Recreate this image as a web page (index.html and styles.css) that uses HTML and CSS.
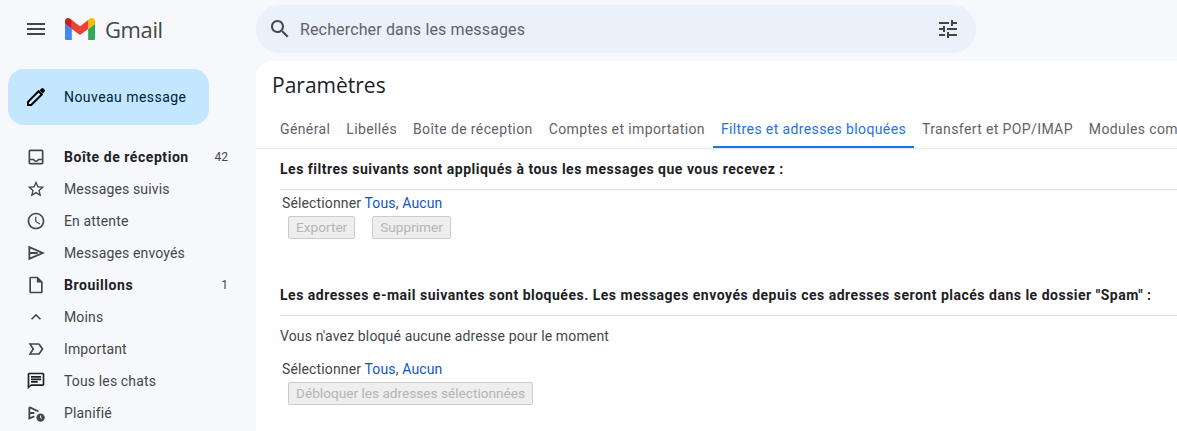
FILE: index.html
```html
<!DOCTYPE html>
<html lang="fr">
<head>
    <meta charset="UTF-8">
    <meta name="viewport" content="width=device-width, initial-scale=1.0">
    <title>Paramètres - Gmail</title>
    <link rel="stylesheet" href="styles.css">
</head>
<body>
    <header class="topbar">
        <div class="brand">
            <svg class="icon-menu" viewBox="0 0 24 24"><path d="M3 18h18v-2H3v2zm0-5h18v-2H3v2zm0-7v2h18V6H3z"/></svg>
            <svg class="logo" viewBox="52 42 88 66">
                <path fill="#4285f4" d="M58 108h14V74L52 59v43c0 3.32 2.69 6 6 6"/>
                <path fill="#34a853" d="M120 108h14c3.32 0 6-2.69 6-6V59l-20 15"/>
                <path fill="#fbbc04" d="M120 48v26l20-15v-8c0-7.42-8.47-11.65-14.4-7.2"/>
                <path fill="#ea4335" d="M72 74V48l24 18 24-18v26L96 92"/>
                <path fill="#c5221f" d="M52 51v8l20 15V48l-5.6-4.2c-5.94-4.45-14.4-.22-14.4 7.2"/>
            </svg>
            <span class="logo-text">Gmail</span>
        </div>
        <div class="search">
            <svg class="icon-search" viewBox="0 0 24 24"><path d="M15.5 14h-.79l-.28-.27C15.41 12.59 16 11.11 16 9.5 16 5.91 13.09 3 9.5 3S3 5.91 3 9.5 5.91 16 9.5 16c1.61 0 3.09-.59 4.23-1.57l.27.28v.79l5 4.99L20.49 19l-4.99-5zm-6 0C7.01 14 5 11.99 5 9.5S7.01 5 9.5 5 14 7.01 14 9.5 11.99 14 9.5 14z"/></svg>
            <span class="search-text">Rechercher dans les messages</span>
            <svg class="icon-tune" viewBox="0 0 24 24"><path d="M3 17v2h6v-2H3zM3 5v2h10V5H3zm10 16v-2h8v-2h-8v-2h-2v6h2zM7 9v2H3v2h4v2h2V9H7zm14 4v-2H11v2h10zm-6-4h2V7h4V5h-4V3h-2v6z"/></svg>
        </div>
    </header>

    <div class="layout">
        <aside class="sidebar">
            <div class="compose">
                <svg class="icon-edit" viewBox="0 0 24 24">
                    <path class="pencil-body" d="M4 20v-3.2L14.6 6.2l3.2 3.2L7.2 20z"/>
                    <path d="M15.6 5.2l1.7-1.7a1.5 1.5 0 0 1 2.1 0l1.1 1.1a1.5 1.5 0 0 1 0 2.1l-1.7 1.7z"/>
                </svg>
                <span>Nouveau message</span>
            </div>
            <ul class="nav">
                <li class="nav-item bold">
                    <svg viewBox="0 0 24 24"><path d="M19 3H5c-1.1 0-2 .9-2 2v14c0 1.1.9 2 2 2h14c1.1 0 2-.9 2-2V5c0-1.1-.9-2-2-2zm0 16H5v-3h3.56c.69 1.19 1.97 2 3.45 2s2.75-.81 3.45-2H19v3zm0-5h-4.99c0 1.1-.9 2-2 2s-2-.9-2-2H5V5h14v9z"/></svg>
                    <span class="nav-label">Boîte de réception</span>
                    <span class="count">42</span>
                </li>
                <li class="nav-item">
                    <svg viewBox="0 0 24 24"><path d="M22 9.24l-7.19-.62L12 2 9.19 8.63 2 9.24l5.46 4.73L5.82 21 12 17.27 18.18 21l-1.63-7.03L22 9.24zM12 15.4l-3.76 2.27 1-4.28-3.32-2.88 4.38-.38L12 6.1l1.71 4.04 4.38.38-3.32 2.88 1 4.28L12 15.4z"/></svg>
                    <span class="nav-label">Messages suivis</span>
                </li>
                <li class="nav-item">
                    <svg viewBox="0 0 24 24"><path d="M11.99 2C6.47 2 2 6.48 2 12s4.47 10 9.99 10C17.52 22 22 17.52 22 12S17.52 2 11.99 2zM12 20c-4.42 0-8-3.58-8-8s3.58-8 8-8 8 3.58 8 8-3.58 8-8 8zm.5-13H11v6l5.25 3.15.75-1.23-4.5-2.67z"/></svg>
                    <span class="nav-label">En attente</span>
                </li>
                <li class="nav-item">
                    <svg class="line-icon" viewBox="0 0 24 24"><path d="M4 5l16 7-16 7zM4 12h10"/></svg>
                    <span class="nav-label">Messages envoyés</span>
                </li>
                <li class="nav-item bold">
                    <svg viewBox="0 0 24 24"><path d="M14 2H6c-1.1 0-1.99.9-1.99 2L4 20c0 1.1.89 2 1.99 2H18c1.1 0 2-.9 2-2V8l-6-6zm4 18H6V4h7v5h5v11z"/></svg>
                    <span class="nav-label">Brouillons</span>
                    <span class="count">1</span>
                </li>
                <li class="nav-item">
                    <svg viewBox="0 0 24 24"><path d="M7.41 15.41L12 10.83l4.59 4.58L18 14l-6-6-6 6z"/></svg>
                    <span class="nav-label">Moins</span>
                </li>
                <li class="nav-item">
                    <svg viewBox="0 0 24 24"><path d="M15 19H3l4.5-7L3 5h12c.65 0 1.26.31 1.63.84L21 12l-4.37 6.16c-.37.52-.98.84-1.63.84zm-8.5-2H15l3.5-5L15 7H6.5l3.5 5-3.5 5z"/></svg>
                    <span class="nav-label">Important</span>
                </li>
                <li class="nav-item">
                    <svg class="icon-chat" viewBox="0 0 24 24"><path d="M20 2H4c-1.1 0-2 .9-2 2v18l4-4h14c1.1 0 2-.9 2-2V4c0-1.1-.9-2-2-2zm0 14H6l-2 2V4h16v12zM6 9h12v2H6zm8 5H6v-2h8zm4-6H6V6h12z"/></svg>
                    <span class="nav-label">Tous les chats</span>
                </li>
                <li class="nav-item">
                    <svg class="line-icon" viewBox="0 0 24 24">
                        <path d="M4 5v13.5l6-2.4M4 5l11 5.2M4 12h6"/>
                        <circle class="clock-face" cx="17.5" cy="17.5" r="5"/>
                        <path class="clock-hand" d="M17.5 15v2.6l1.6 1"/>
                    </svg>
                    <span class="nav-label">Planifié</span>
                </li>
            </ul>
        </aside>

        <main class="main">
            <h1>Paramètres</h1>
            <nav class="tabs">
                <a class="tab">Général</a>
                <a class="tab">Libellés</a>
                <a class="tab">Boîte de réception</a>
                <a class="tab">Comptes et importation</a>
                <a class="tab active">Filtres et adresses bloquées</a>
                <a class="tab">Transfert et POP/IMAP</a>
                <a class="tab">Modules complémentaires</a>
            </nav>

            <section class="block">
                <h2>Les filtres suivants sont appliqués à tous les messages que vous recevez :</h2>
                <p class="select-line">Sélectionner <a>Tous</a>, <a>Aucun</a></p>
                <div class="actions">
                    <button disabled>Exporter</button>
                    <button disabled>Supprimer</button>
                </div>
            </section>

            <section class="block second">
                <h2>Les adresses e-mail suivantes sont bloquées. Les messages envoyés depuis ces adresses seront placés dans le dossier "Spam" :</h2>
                <p class="empty">Vous n'avez bloqué aucune adresse pour le moment</p>
                <p class="select-line">Sélectionner <a>Tous</a>, <a>Aucun</a></p>
                <div class="actions">
                    <button disabled>Débloquer les adresses sélectionnées</button>
                </div>
            </section>
        </main>
    </div>
</body>
</html>
```

FILE: styles.css
```css
/* Global Styles */
html, body {
    height: 100%;
    overflow: hidden;
}

body {
    font-family: 'Roboto', 'Liberation Sans', sans-serif;
    font-size: 14px;
    letter-spacing: 0.14px;
    background-color: #f6f8fc;
    margin: 0;
    padding: 0;
    color: #444746;
}

svg {
    fill: #444746;
    flex: none;
    display: block;
}

/* Top bar */
.topbar {
    display: flex;
    height: 61px;
    box-sizing: border-box;
    padding-top: 5px;
}

.brand {
    width: 256px;
    height: 48px;
    display: flex;
    align-items: center;
    flex: none;
}

.icon-menu {
    width: 24px;
    height: 24px;
    margin-left: 24px;
}

.logo {
    width: 30px;
    height: 22.5px;
    margin-left: 17px;
}

.logo-text {
    font-family: 'Open Sans', sans-serif;
    font-size: 22px;
    margin-left: 10px;
    letter-spacing: -0.4px;
}

.search {
    width: 720px;
    height: 48px;
    background-color: #eaf1fb;
    border-radius: 24px;
    display: flex;
    align-items: center;
    box-sizing: border-box;
    padding: 0 16px 0 12px;
}

.icon-search, .icon-tune {
    width: 24px;
    height: 24px;
}

.search-text {
    flex: 1;
    margin-left: 8px;
    font-size: 16px;
    color: #5f6368;
}

/* Sidebar */
.layout {
    display: flex;
}

.sidebar {
    width: 256px;
    flex: none;
}

.compose {
    margin: 8px 0 0 8px;
    width: 201px;
    height: 56px;
    background-color: #c2e7ff;
    border-radius: 16px;
    display: flex;
    align-items: center;
    color: #001d35;
    letter-spacing: 0.45px;
    box-sizing: border-box;
    padding-left: 16px;
}

.icon-edit {
    width: 24px;
    height: 24px;
    fill: #000;
    margin-right: 16px;
}

.pencil-body {
    fill: none;
    stroke: #000;
    stroke-width: 2;
}

.nav {
    list-style: none;
    margin: 16px 0 0;
    padding: 0;
}

.nav-item {
    height: 32px;
    display: flex;
    align-items: center;
    padding: 0 28px 0 26px;
}

.nav-item svg {
    width: 20px;
    height: 20px;
    margin-right: 18px;
}

.nav-item .icon-chat {
    fill: #1f1f1f;
}

.nav-item .line-icon {
    fill: none;
    stroke: #444746;
    stroke-width: 2.2;
}

.nav-item .clock-face {
    fill: #444746;
    stroke: none;
}

.nav-item .clock-hand {
    stroke: #f6f8fc;
    stroke-width: 1.2;
}

.nav-label {
    flex: 1;
}

.bold .nav-label {
    font-weight: 700;
    letter-spacing: 0.55px;
    color: #202124;
}

.count {
    font-size: 12px;
    letter-spacing: 0;
}

/* Main panel */
.main {
    flex: 1;
    min-width: 0;
    background-color: #fff;
    border-top-left-radius: 16px;
    height: 370px;
    overflow: hidden;
}

h1 {
    font-family: 'Open Sans', sans-serif;
    font-size: 21px;
    font-weight: 400;
    letter-spacing: 0;
    color: #202124;
    margin: 0;
    padding: 8px 0 0 16px;
    height: 42px;
    line-height: 32px;
}

.tabs {
    display: flex;
    height: 38px;
    box-sizing: border-box;
    border-bottom: 1px solid #e8eaed;
    white-space: nowrap;
    padding-left: 16px;
}

.tab {
    padding: 0 8px;
    line-height: 36px;
    color: #5f6368;
    letter-spacing: 0.38px;
    height: 37px;
    box-sizing: border-box;
}

.tab.active {
    color: #1a73e8;
    border-bottom: 2px solid #1a73e8;
}

.block {
    margin-left: 24px;
}

.block h2 {
    margin: 0;
    font-size: 14px;
    font-weight: 700;
    letter-spacing: 0.5px;
    color: #202124;
    height: 41px;
    line-height: 40px;
    box-sizing: border-box;
    border-bottom: 1px solid #e0e0e0;
    white-space: nowrap;
}

.second {
    margin-top: 36px;
}

.select-line {
    margin: 4px 0 0 2px;
    line-height: 18px;
    color: #444746;
}

.select-line a {
    color: #1155cc;
}

.empty {
    margin: 10px 0 14px;
    line-height: 20px;
}

.actions {
    display: flex;
    gap: 17px;
    padding-left: 8px;
    margin-top: 4px;
}

button {
    font-family: 'Roboto', sans-serif;
    font-size: 13.65px;
    height: 23px;
    padding: 0 7px 2px;
    color: #b5b5b5;
    background-color: #eee;
    border: 1px solid #ccc;
    border-radius: 2px;
}
```
